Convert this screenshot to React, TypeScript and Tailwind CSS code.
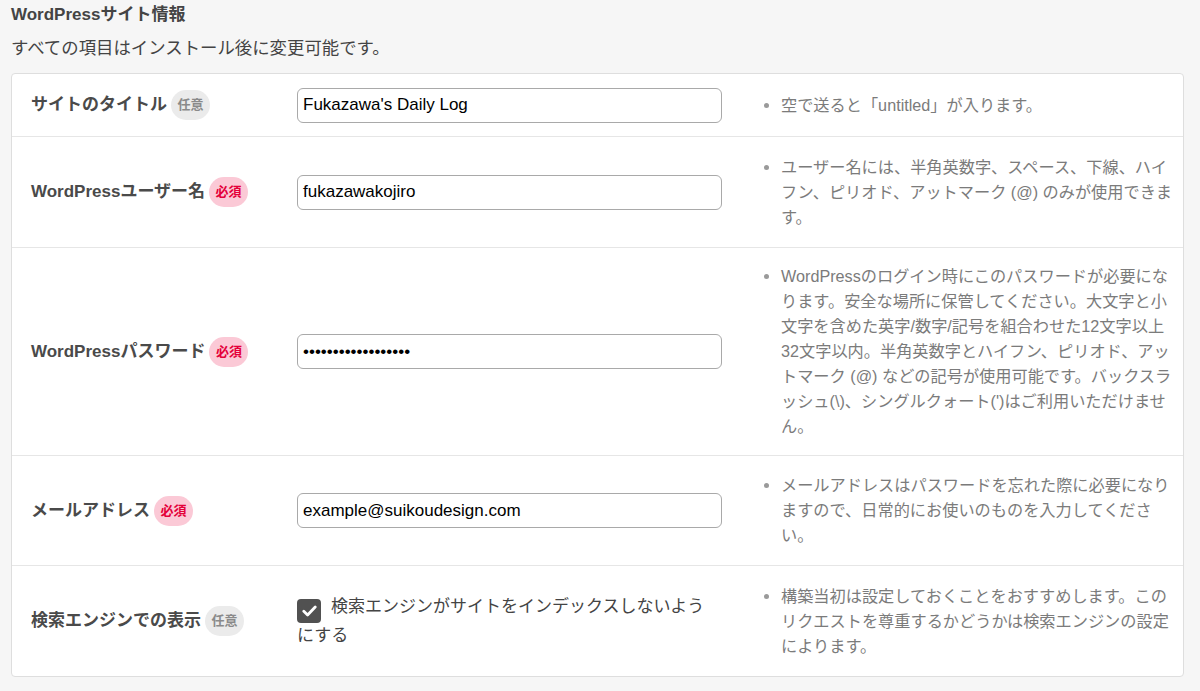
import { ReactNode } from "react";

const FONT = { fontFamily: '"Liberation Sans", "Noto Sans CJK JP", sans-serif' };

function Badge({ required }: { required?: boolean }) {
  return required ? (
    <span className="ml-1 inline-flex h-[30px] w-[39px] items-center justify-center rounded-full bg-[#fbc9d6] text-[13px] font-bold text-[#e4003a]">必須</span>
  ) : (
    <span className="ml-1 inline-flex h-[30px] w-[39px] items-center justify-center rounded-full bg-[#ebebeb] text-[13px] font-bold text-[#8a8a8a]">任意</span>
  );
}

function Help({ lines }: { lines: string[] }) {
  return (
    <div className="ml-[42px] flex flex-1 pr-2 text-[16.2px] leading-[25px] text-[#7b7b7b]">
      <span className="mt-[10px] mr-[12px] h-[5px] w-[5px] shrink-0 rounded-full bg-[#9a9a9a]" />
      <div className="whitespace-nowrap">
        {lines.map((l, i) => <div key={i}>{l}</div>)}
      </div>
    </div>
  );
}

function TextInput({ value }: { value: string }) {
  return (
    <div className="flex h-[35px] w-[425px] items-center rounded-[6px] border border-[#a9a9a9] bg-white px-[5px] text-[17px] text-black">
      {value}
    </div>
  );
}

function Row({ label, required, h, field, help, last }: { label: string; required?: boolean; h: string; field: ReactNode; help: string[]; last?: boolean }) {
  return (
    <div className={`flex items-center pl-[19px] ${h} ${last ? "" : "border-b border-[#e6e6e6]"}`}>
      <div className="flex w-[266px] shrink-0 items-center text-[17px] font-bold text-[#4a4a4a]">
        {label}
        <Badge required={required} />
      </div>
      <div className="w-[425px] shrink-0">{field}</div>
      <Help lines={help} />
    </div>
  );
}

export default function App() {
  return (
    <div className="h-[691px] w-[1200px] overflow-hidden bg-[#f6f6f6] pl-[11px] pr-4" style={FONT}>
      <div className="pt-[5px] text-[17px] leading-[20px] font-bold text-[#444]">WordPressサイト情報</div>
      <div className="mt-[13px] text-[17.4px] leading-[20px] text-[#444]">すべての項目はインストール後に変更可能です。</div>
      <div className="mt-[15px] w-[1173px] rounded-[4px] border border-[#dedede] bg-white">
        <Row
          label="サイトのタイトル"
          h="h-[63px]"
          field={<TextInput value="Fukazawa's Daily Log" />}
          help={["空で送ると「untitled」が入ります。"]}
        />
        <Row
          label="WordPressユーザー名"
          required
          h="h-[111px]"
          field={<TextInput value="fukazawakojiro" />}
          help={[
            "ユーザー名には、半角英数字、スペース、下線、ハイ",
            "フン、ピリオド、アットマーク (@) のみが使用できま",
            "す。",
          ]}
        />
        <Row
          label="WordPressパスワード"
          required
          h="h-[208px]"
          field={<TextInput value={"•".repeat(18)} />}
          help={[
            "WordPressのログイン時にこのパスワードが必要にな",
            "ります。安全な場所に保管してください。大文字と小",
            "文字を含めた英字/数字/記号を組合わせた12文字以上",
            "32文字以内。半角英数字とハイフン、ピリオド、アッ",
            "トマーク (@) などの記号が使用可能です。バックスラ",
            "ッシュ(\\)、シングルクォート(')はご利用いただけませ",
            "ん。",
          ]}
        />
        <Row
          label="メールアドレス"
          required
          h="h-[110px]"
          field={<TextInput value="example@suikoudesign.com" />}
          help={[
            "メールアドレスはパスワードを忘れた際に必要になり",
            "ますので、日常的にお使いのものを入力してくださ",
            "い。",
          ]}
        />
        <Row
          label="検索エンジンでの表示"
          h="h-[110px]"
          last
          field={
            <div className="text-[17px] leading-[26px] text-[#444]">
              <span className="mr-[10px] inline-flex h-[24px] w-[24px] items-center justify-center rounded-[4px] bg-[#515151] align-[-5px]">
                <svg width="15" height="12" viewBox="0 0 15 12" fill="none">
                  <path d="M1.8 6.2 5.6 10 13.2 2" stroke="white" strokeWidth="2.8" strokeLinecap="round" strokeLinejoin="round" />
                </svg>
              </span>
              検索エンジンがサイトをインデックスしないよう
              <br />
              にする
            </div>
          }
          help={[
            "構築当初は設定しておくことをおすすめします。この",
            "リクエストを尊重するかどうかは検索エンジンの設定",
            "によります。",
          ]}
        />
      </div>
    </div>
  );
}
